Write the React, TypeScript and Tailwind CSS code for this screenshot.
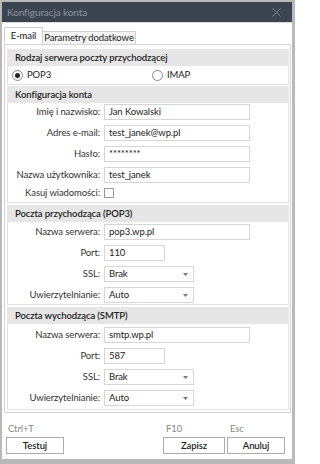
import React from "react";

const font = { fontFamily: "Lato, 'Noto Sans', sans-serif" };

function TextRow({ label, value, width = "w-[146px]" }: { label: string; value: string; width?: string }) {
    return (
        <div className="flex items-center h-[16px]">
            <div className="w-[92px] text-right text-[#333] whitespace-nowrap">{label}</div>
            <div className={`ml-[4px] h-[16px] ${width} border border-[#d6d6d6] bg-white flex items-center pl-[4px] text-[#222]`}>
                {value}
            </div>
        </div>
    );
}

function SelectRow({ label, value }: { label: string; value: string }) {
    return (
        <div className="flex items-center h-[16px]">
            <div className="w-[92px] text-right text-[#333] whitespace-nowrap">{label}</div>
            <div className="ml-[4px] h-[16px] w-[90px] border border-[#d6d6d6] bg-white flex items-center justify-between pl-[4px] pr-[5px] text-[#222]">
                <span>{value}</span>
                <svg width="5" height="3" viewBox="0 0 5 3">
                    <path d="M0 0 H5 L2.5 3 Z" fill="#777" />
                </svg>
            </div>
        </div>
    );
}

function Section({ title, children, className = "" }: { title: string; children: React.ReactNode; className?: string }) {
    return (
        <div className={className}>
            <div className="h-[17px] bg-[#e6e6e6] flex items-center pl-[8px] font-semibold text-[#222] whitespace-nowrap">{title}</div>
            <div className="border border-t-0 border-[#e2e2e2] bg-white">{children}</div>
        </div>
    );
}

function Radio({ checked, label }: { checked?: boolean; label: string }) {
    return (
        <div className="flex items-center gap-[4px] pl-[4px]">
            <div className="w-[11px] h-[11px] rounded-full border border-[#888] bg-white flex items-center justify-center">
                {checked && <div className="w-[5px] h-[5px] rounded-full bg-[#222]" />}
            </div>
            <span className="text-[#222]">{label}</span>
        </div>
    );
}

export default function App() {
    return (
        <div
            className="w-[295px] h-[464px] bg-[#b9b9b9] pt-[2px] pl-[2px] pr-[3px] pb-[5px] text-[9.5px] tracking-[-0.1px] leading-[12px]"
            style={font}
        >
            <div className="h-full bg-white flex flex-col">
                <div className="h-[20px] bg-[#3b4451] flex items-center justify-between pl-[5px] pr-[11px] shrink-0">
                    <span className="text-[#8d949d] text-[10px]">Konfiguracja konta</span>
                    <svg width="9" height="9" viewBox="0 0 9 9">
                        <path d="M0.5 0.5 L8.5 8.5 M8.5 0.5 L0.5 8.5" stroke="#7c848e" strokeWidth="1" />
                    </svg>
                </div>
                <div className="h-px bg-[#dcdcdc]" />
                <div className="flex items-end pl-[2px] pt-[4px]">
                    <div className="h-[17px] w-[39px] border border-b-0 border-[#d0d0d0] bg-white flex items-center justify-center text-[#111]">
                        E-mail
                    </div>
                    <div className="h-[13px] w-[93px] border border-l-0 border-b-0 border-[#d0d0d0] bg-[#f3f3f3] flex items-center justify-center text-[#222] whitespace-nowrap">
                        Parametry dodatkowe
                    </div>
                </div>
                <div className="ml-[2px] mr-[1px] border border-[#d4d4d4] pt-[4px] pl-[2px] pr-[1px] pb-[2px]">
                    <Section title="Rodzaj serwera poczty przychodzącej">
                        <div className="h-[18px] grid grid-cols-2 items-center">
                            <Radio checked label="POP3" />
                            <Radio label="IMAP" />
                        </div>
                    </Section>
                    <Section title="Konfiguracja konta" className="mt-[1px]">
                        <div className="flex flex-col gap-[5px] pt-[1px] pb-[4px]">
                            <TextRow label="Imię i nazwisko:" value="Jan Kowalski" />
                            <TextRow label="Adres e-mail:" value="test_janek@wp.pl" />
                            <TextRow label="Hasło:" value="********" />
                            <TextRow label="Nazwa użytkownika:" value="test_janek" />
                            <div className="flex items-center h-[11px] -mt-[1px]">
                                <div className="w-[92px] text-right text-[#333]">Kasuj wiadomości:</div>
                                <div className="ml-[4px] w-[10px] h-[10px] border border-[#999] bg-white" />
                            </div>
                        </div>
                    </Section>
                    <Section title="Poczta przychodząca (POP3)" className="mt-[2px]">
                        <div className="flex flex-col gap-[5px] pt-[2px] pb-[1px]">
                            <TextRow label="Nazwa serwera:" value="pop3.wp.pl" />
                            <TextRow label="Port:" value="110" width="w-[61px]" />
                            <SelectRow label="SSL:" value="Brak" />
                            <SelectRow label="Uwierzytelnianie:" value="Auto" />
                        </div>
                    </Section>
                    <Section title="Poczta wychodząca (SMTP)" className="mt-[2px]">
                        <div className="flex flex-col gap-[5px] pt-[3px] pb-[3px]">
                            <TextRow label="Nazwa serwera:" value="smtp.wp.pl" />
                            <TextRow label="Port:" value="587" width="w-[61px]" />
                            <SelectRow label="SSL:" value="Brak" />
                            <SelectRow label="Uwierzytelnianie:" value="Auto" />
                        </div>
                    </Section>
                </div>
                <div className="flex items-end pl-[4px] pr-[7px] mt-[10px]">
                    <div className="flex flex-col">
                        <span className="text-[#888] leading-[12px] pl-[2px]">Ctrl+T</span>
                        <div className="mt-[2px] h-[17px] w-[58px] border border-[#adadad] bg-white flex items-center justify-center font-semibold text-[#222]">
                            Testuj
                        </div>
                    </div>
                    <div className="ml-auto flex flex-col">
                        <span className="text-[#888] leading-[12px] pl-[3px]">F10</span>
                        <div className="mt-[2px] h-[17px] w-[62px] border border-[#adadad] bg-white flex items-center justify-center font-semibold text-[#222]">
                            Zapisz
                        </div>
                    </div>
                    <div className="ml-[2px] flex flex-col">
                        <span className="text-[#888] leading-[12px] pl-[3px]">Esc</span>
                        <div className="mt-[2px] h-[17px] w-[58px] border border-[#adadad] bg-white flex items-center justify-center font-semibold text-[#222]">
                            Anuluj
                        </div>
                    </div>
                </div>
            </div>
        </div>
    );
}
